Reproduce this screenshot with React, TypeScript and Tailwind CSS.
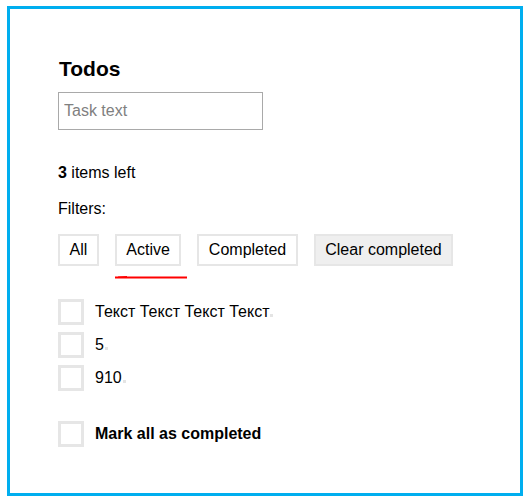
import React from "react";

const font = { fontFamily: '"Liberation Sans", Arial, sans-serif' };

function Dot() {
  return <span className="inline-block w-[3px] h-[3px] bg-[#e4e4e4] ml-[1px] align-baseline" />;
}

function Row({ text }: { text: string }) {
  return (
    <div className="flex items-center h-[33px]">
      <span className="w-[26px] h-[26px] border-[3px] border-[#e6e6e6] bg-white shrink-0" />
      <span className="ml-[11px] text-[16px] leading-[20px] text-black">
        {text}
        <Dot />
      </span>
    </div>
  );
}

export default function App() {
  return (
    <div className="pl-[7px] pt-[6px] bg-white w-[528px] h-[503px]" style={font}>
      <div className="w-[516px] h-[490px] border-[3px] border-[#00aeef] pl-[48px] pt-[48px] text-black">
        <h1 className="text-[21px] leading-[24px] font-bold m-0 ml-[1px]">Todos</h1>
        <input
          placeholder="Task text"
          className="mt-[11px] w-[205px] h-[38px] border border-[#a9a9a9] px-[5px] text-[16px] placeholder:text-[#808080] outline-none"
          style={font}
        />
        <div className="mt-[33px] text-[16px] leading-[20px]">
          <b>3</b> items left
        </div>
        <div className="mt-[16px] text-[16px] leading-[20px]">Filters:</div>
        <div className="mt-[15px] flex gap-[16px]">
          <button className="h-[32px] px-[9.5px] border-2 border-[#e6e6e6] bg-white text-[16px] leading-[20px]">All</button>
          <div className="relative">
            <button className="h-[32px] px-[9.5px] border-2 border-[#e6e6e6] bg-white text-[16px] leading-[20px]">Active</button>
            <svg className="absolute left-0 top-[41px]" width="74" height="5" viewBox="0 0 74 5">
              <path d="M0 2.5 L72 2.5" stroke="#ff0000" strokeWidth="2" />
              <path d="M3 2 L12 1.5" stroke="#ff0000" strokeWidth="1" />
            </svg>
          </div>
          <button className="h-[32px] px-[9.5px] border-2 border-[#e6e6e6] bg-white text-[16px] leading-[20px]">Completed</button>
          <button className="h-[32px] px-[9.5px] border-2 border-[#e6e6e6] bg-[#efefef] text-[16px] leading-[20px]">Clear completed</button>
        </div>
        <div className="mt-[29px]">
          <Row text="Текст Текст Текст Текст" />
          <Row text="5" />
          <Row text="910" />
        </div>
        <div className="mt-[23px] flex items-center h-[33px]">
          <span className="w-[26px] h-[26px] border-[3px] border-[#e6e6e6] bg-white shrink-0" />
          <span className="ml-[11px] text-[16px] leading-[20px] font-bold">Mark all as completed</span>
        </div>
      </div>
    </div>
  );
}
